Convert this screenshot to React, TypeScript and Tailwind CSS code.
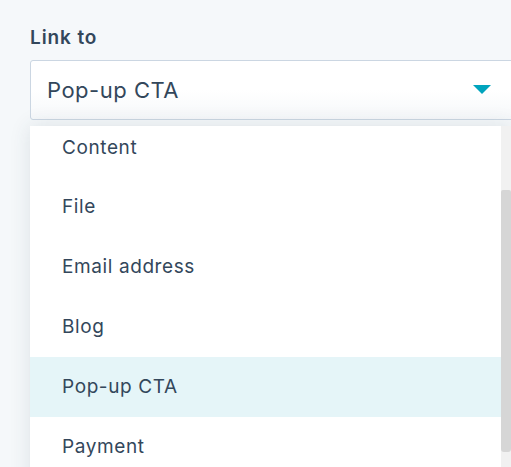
const items = ['Content', 'File', 'Email address', 'Blog', 'Pop-up CTA', 'Payment'];

export default function App() {
  return (
    <div
      className="w-[511px] h-[467px] overflow-hidden bg-[#f5f8fa] text-[#33475b] pl-[30px] pt-[26px]"
      style={{ fontFamily: 'Inter, "Open Sans", sans-serif' }}
    >
      <div className="w-[500px]">
        <label className="block text-[19px] font-semibold leading-[24px] tracking-[0.9px] text-[#33475b]">
          Link to
        </label>
        <div className="mt-[10px] h-[60px] flex items-center justify-between rounded-[3px] border border-[#cbd6e2] bg-gradient-to-b from-white from-50% to-[#f6f8fa] pl-[16px] pr-[38px]">
          <span className="text-[22px] tracking-[0.5px]">Pop-up CTA</span>
          <svg width="18" height="10" viewBox="0 0 18 10" className="mt-[-1px]">
            <path d="M0 0h18L9 9z" fill="#00a4bd" />
          </svg>
        </div>
        <div className="mt-[6px] w-[481px] h-[400px] flex bg-white shadow-[0_0_20px_0_rgba(45,62,80,0.12)]">
          <ul className="flex-1">
            {items.map((item, i) => (
              <li
                key={item}
                className={`flex pl-[32px] text-[19px] tracking-[0.6px] ${
                  i === 0 ? 'h-[51px] items-start pt-[8px]' : 'h-[60px] items-center'
                } ${item === 'Pop-up CTA' ? 'bg-[#e5f5f8]' : ''}`}
              >
                {item}
              </li>
            ))}
          </ul>
          <div className="w-[10px] bg-[#f1f1f1] flex flex-col">
            <div className="h-[64px]" />
            <div className="h-[262px] bg-[#d6d6d6] rounded-b-[3px] rounded-t-[2px]" />
          </div>
        </div>
      </div>
    </div>
  );
}
